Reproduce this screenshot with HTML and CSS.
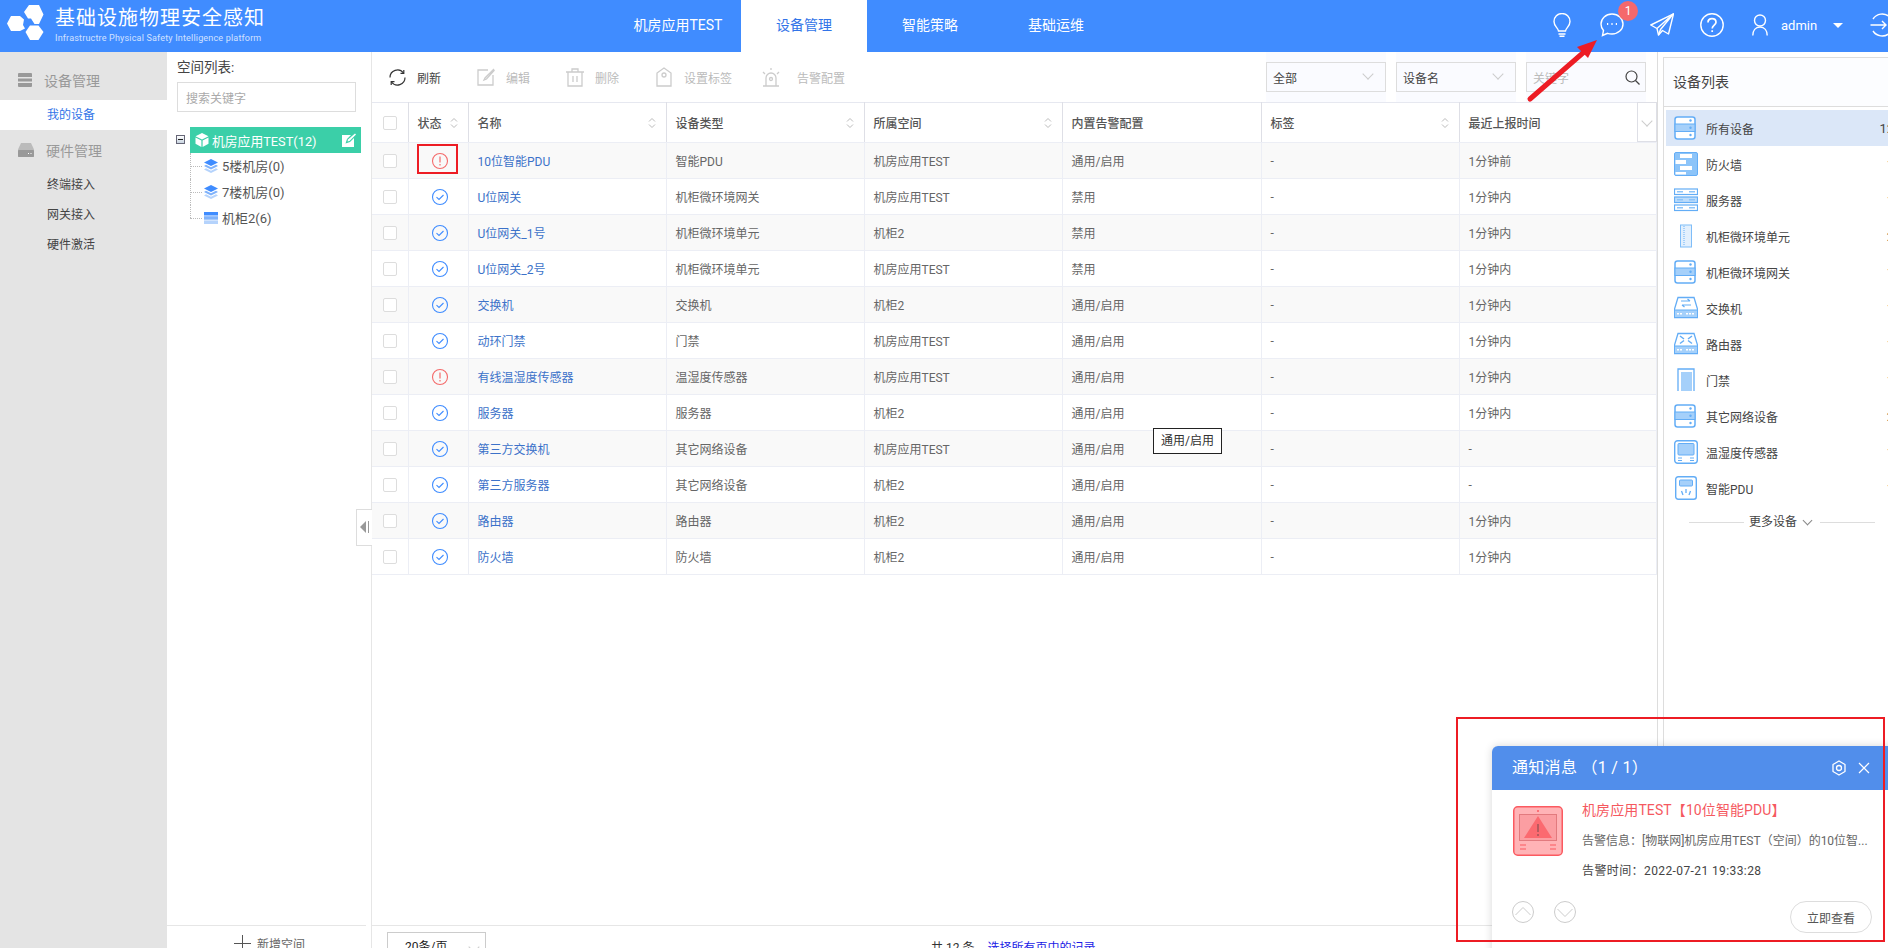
FILE: index.html
```html
<!DOCTYPE html>
<html lang="zh-CN">

<head>
  <meta charset="utf-8">
  <title>基础设施物理安全感知</title>
  <link rel="stylesheet" href="styles.css">
</head>

<body>
  <svg class="defs" width="0" height="0">
    <defs>
      <symbol id="sort" viewBox="0 0 8 12">
        <path d="M1 4.500 4 1.500 7 4.500M1 7.500 4 10.500 7 7.500" fill="none" stroke="#bbb" stroke-width="1" />
      </symbol>
      <symbol id="ok" viewBox="0 0 18 18">
        <circle cx="9" cy="9" r="7.500" fill="none" stroke="#3f8cff" stroke-width="1.100" />
        <path d="M5.500 9.200 8 11.500 12.500 7" fill="none" stroke="#3f8cff" stroke-width="1.100" />
      </symbol>
      <symbol id="warn" viewBox="0 0 18 18">
        <circle cx="9" cy="9" r="7.500" fill="none" stroke="#f46a6a" stroke-width="1.100" />
        <path d="M9 4.500V10.500M9 12V13.500" fill="none" stroke="#f46a6a" stroke-width="1.200" />
      </symbol>
      <symbol id="stack" viewBox="0 0 24 24">
        <rect x="1" y="1" width="20" height="22" rx="2.500" fill="#fff" stroke="#63adf6" stroke-width="1.500" />
        <rect x="1" y="8" width="20" height="7.500" fill="#a5d0fa" stroke="#63adf6" />
        <circle cx="16.500" cy="4.500" r="1.200" fill="#63adf6" />
        <circle cx="16.500" cy="11.700" r="1.200" fill="#63adf6" />
        <circle cx="16.500" cy="19" r="1.200" fill="#63adf6" />
      </symbol>
      <symbol id="wall" viewBox="0 0 24 24">
        <rect x="0.500" y="0.500" width="23" height="23" rx="1.500" fill="#8cc4f9" stroke="#63adf6" />
        <path d="M6 2H18V6H6ZM1.500 8H12V12H1.500ZM6 14H18V18H6ZM1.500 20H12V22.500H1.500Z" fill="#fff" />
      </symbol>
      <symbol id="rack" viewBox="0 0 24 24">
        <g fill="#fff" stroke="#63adf6" stroke-width="1.200">
          <rect x="0.500" y="1" width="23" height="5.500" />
          <rect x="0.500" y="9" width="23" height="5.500" fill="#bcdcfb" />
          <rect x="0.500" y="17" width="23" height="5.500" />
        </g>
        <path d="M3 3.700H9M15 3.700H21M3 11.700H9M15 11.700H21M3 19.700H9M15 19.700H21" stroke="#8cc4f9" stroke-width="1.500" />
      </symbol>
      <symbol id="cabinet" viewBox="0 0 24 24">
        <rect x="6.500" y="1" width="11" height="22" fill="#e3f0fd" stroke="#7fbdf8" />
        <path d="M10 2V22" stroke="#a5d0fa" stroke-width="2" stroke-dasharray="1 1" />
      </symbol>
      <symbol id="switch" viewBox="0 0 24 24">
        <path d="M4 1.500H20L23.500 13V21.500H0.500V13Z" fill="#fff" stroke="#63adf6" stroke-width="1.300" />
        <rect x="0.500" y="14" width="23" height="7.500" fill="#a5d0fa" stroke="#63adf6" />
        <path d="M7 5H16M13.500 3 16 5M17 9H8M10.500 11 8 9" fill="none" stroke="#63adf6" stroke-width="1.200" />
        <path d="M3 17.800H9M12 17.800H21" stroke="#fff" stroke-width="1.500" stroke-dasharray="2 1" />
      </symbol>
      <symbol id="router" viewBox="0 0 24 24">
        <path d="M4 1.500H20L23.500 13V21.500H0.500V13Z" fill="#fff" stroke="#63adf6" stroke-width="1.300" />
        <rect x="0.500" y="14" width="23" height="7.500" fill="#a5d0fa" stroke="#63adf6" />
        <path d="M6 4 10 7M18 4 14 7M6 11.500 10 8.500M18 11.500 14 8.500" stroke="#63adf6" stroke-width="1.500" />
        <path d="M3 17.800H9M12 17.800H21" stroke="#fff" stroke-width="1.500" stroke-dasharray="2 1" />
      </symbol>
      <symbol id="door" viewBox="0 0 24 24">
        <path d="M4 23V1H20V23" fill="#fff" stroke="#63adf6" stroke-width="1.300" />
        <rect x="7" y="4" width="11" height="19" fill="#a5d0fa" />
      </symbol>
      <symbol id="screen" viewBox="0 0 24 24">
        <rect x="0.700" y="0.700" width="22.600" height="22.600" rx="3" fill="#fff" stroke="#63adf6" stroke-width="1.400" />
        <rect x="4" y="3.500" width="16" height="11.500" rx="1" fill="#a5d0fa" stroke="#63adf6" />
        <path d="M4 18H8M4 20.500H8M16 18H20M16 20.500H20" stroke="#63adf6" />
      </symbol>
      <symbol id="pdu" viewBox="0 0 24 24">
        <rect x="1.700" y="0.700" width="20.600" height="22.600" rx="2.500" fill="#fff" stroke="#63adf6" stroke-width="1.400" />
        <rect x="5.500" y="4" width="13" height="6" rx="1" fill="#a5d0fa" stroke="#63adf6" />
        <path d="M12 13V17M7.500 15 9 19M16.500 15 15 19" stroke="#63adf6" stroke-width="1.300" />
      </symbol>
    </defs>
  </svg>

  <div class="app">
    <header class="topbar">
      <div class="brand">
        <svg class="logo" width="38" height="38" viewBox="0 0 38 38">
          <path d="M22 1H32L36.500 10.500 32 20H27.500L24 14.500H21L17 8Z" fill="#fff" />
          <path d="M4 12H13L17 15.500 16 21 18 24.500 13 27H4L0 19.500Z" fill="#fff" />
          <path d="M23 21.500H31.500L36.500 28 31.500 36H23L18.500 28Z" fill="#fff" />
        </svg>
        <div class="brand-text">
          <div class="brand-name">基础设施物理安全感知</div>
          <div class="brand-sub">Infrastructre Physical Safety Intelligence platform</div>
        </div>
      </div>
      <nav class="nav">
        <a class="nav-item">机房应用TEST</a>
        <a class="nav-item active">设备管理</a>
        <a class="nav-item">智能策略</a>
        <a class="nav-item">基础运维</a>
      </nav>
      <div class="tools">
        <svg class="tool-bulb" width="18" height="24" viewBox="0 0 18 24" fill="none" stroke="#fff" stroke-width="1.400">
          <path d="M5.500 18C5 14.500 1 13.500 1 8.500A8 8 0 0 1 17 8.500C17 13.500 13 14.500 12.500 18Z" />
          <path d="M5.500 21H12.500M6.500 23.300H11.500" />
        </svg>
        <span class="tool-chat">
          <svg width="24" height="24" viewBox="0 0 24 24" fill="none" stroke="#fff" stroke-width="1.400">
            <path d="M12 1C5.800 1 1 5.400 1 11C1 13.800 2.200 16 3.500 17.500L2.500 22.500 7.500 20.300C9 20.800 10.500 21 12 21C18.200 21 23 16.600 23 11S18.200 1 12 1Z" />
            <path d="M7 11H8.200M11.400 11H12.600M15.800 11H17" stroke-width="1.800" />
          </svg>
          <b class="badge">1</b>
        </span>
        <svg class="tool-plane" width="24" height="24" viewBox="0 0 24 24" fill="none" stroke="#fff" stroke-width="1.400" stroke-linejoin="round">
          <path d="M23.500 0.800 0.800 12 7 15.500 8.500 22 12.500 17.500 18.500 21Z" />
          <path d="M23.500 0.800 7 15.500M23.500 0.800 10.500 16.500 8.500 22" />
        </svg>
        <svg class="tool-help" width="24" height="24" viewBox="0 0 24 24" fill="none" stroke="#fff" stroke-width="1.400">
          <circle cx="12" cy="12" r="11.200" />
          <path d="M8 9.500C8 7 9.800 5.700 12 5.700S16 7 16 9.200C16 12 12.200 12.300 12.200 15.500M12.200 17.300V19" stroke-width="1.700" />
        </svg>
        <svg class="tool-user" width="16" height="22" viewBox="0 0 16 22" fill="none" stroke="#fff" stroke-width="1.400">
          <circle cx="8" cy="6.500" r="5.500" />
          <path d="M0.800 21.500C0.800 16.500 3.500 13 8 13S15.200 16.500 15.200 21.500" />
        </svg>
        <span class="username">admin</span>
        <i class="caret"></i>
        <svg class="tool-exit" width="22" height="24" viewBox="0 0 22 24" fill="none" stroke="#fff" stroke-width="1.400">
          <path d="M3 6A11 11 0 1 1 3 18M0.500 12H16M12 8 16 12 12 16" />
        </svg>
      </div>
    </header>

    <div class="content">
      <aside class="sidebar">
        <div class="side-group first">
          <svg width="14" height="14" viewBox="0 0 14 14">
            <path d="M1 0H13A1 1 0 0 1 14 1V4H0V1A1 1 0 0 1 1 0ZM0 5.500H14V8.500H0ZM0 10H14V13A1 1 0 0 1 13 14H1A1 1 0 0 1 0 13Z" fill="#999" />
          </svg>
          设备管理
        </div>
        <a class="side-link active">我的设备</a>
        <div class="side-group">
          <svg width="16" height="14" viewBox="0 0 16 14">
            <path d="M3 0H13L16 6.500V14H0V6.500Z" fill="#bbb" />
            <rect y="7" width="16" height="7" rx="1" fill="#999" />
            <path d="M10 10.500H11M12.500 10.500H13.500" stroke="#fff" />
          </svg>
          硬件管理
        </div>
        <a class="side-link">终端接入</a>
        <a class="side-link">网关接入</a>
        <a class="side-link">硬件激活</a>
      </aside>

      <section class="space-panel">
        <div class="space-title">空间列表:</div>
        <input class="space-search" placeholder="搜索关键字">
        <div class="tree">
          <i class="tree-toggle"></i>
          <div class="tree-root">
            <svg width="14" height="14" viewBox="0 0 14 14">
              <path d="M7 0 13.500 3.300 7 6.600 0.500 3.300ZM0.500 4.500 6.400 7.500V14L0.500 10.800ZM13.500 4.500 7.600 7.500V14L13.500 10.800Z" fill="#fff" />
            </svg>
            <span class="tree-root-name">机房应用TEST(12)</span>
            <svg width="14" height="14" viewBox="0 0 14 14">
              <path d="M0 2H9L5 6 3.500 10.500 8 9 12 5V14H0Z" fill="#fff" />
              <path d="M13 0.500 14 1.500 7.500 8 5.500 8.500 6 6.500Z" fill="#fff" />
            </svg>
          </div>
          <div class="tree-node">
            <svg width="14" height="14" viewBox="0 0 14 14">
              <path d="M7 0 14 3.500 7 7 0 3.500Z" fill="#3f8cff" />
              <path d="M2 5.800 7 8.300 12 5.800 14 7 7 10.500 0 7Z" fill="#7fb2fb" />
              <path d="M2 9.300 7 11.800 12 9.300 14 10.500 7 14 0 10.500Z" fill="#b5d3fc" />
            </svg>
            5楼机房(0)
          </div>
          <div class="tree-node">
            <svg width="14" height="14" viewBox="0 0 14 14">
              <path d="M7 0 14 3.500 7 7 0 3.500Z" fill="#3f8cff" />
              <path d="M2 5.800 7 8.300 12 5.800 14 7 7 10.500 0 7Z" fill="#7fb2fb" />
              <path d="M2 9.300 7 11.800 12 9.300 14 10.500 7 14 0 10.500Z" fill="#b5d3fc" />
            </svg>
            7楼机房(0)
          </div>
          <div class="tree-node">
            <svg width="14" height="12" viewBox="0 0 14 12">
              <rect width="14" height="3.500" fill="#3f8cff" />
              <rect y="4.200" width="14" height="3.500" fill="#7fb2fb" />
              <rect y="8.400" width="14" height="3.600" fill="#b5d3fc" />
            </svg>
            机柜2(6)
          </div>
        </div>
        <div class="space-foot">
          <svg width="17" height="17" viewBox="0 0 17 17" stroke="#555">
            <path d="M8.500 0V17M0 8.500H17" />
          </svg>
          新增空间
        </div>
        <div class="collapse"><i></i></div>
      </section>

      <main class="main">
        <div class="toolbar">
          <span class="action live">
            <span class="action-ic">
              <svg width="17" height="17" viewBox="0 0 17 17" fill="none" stroke="#333" stroke-width="1.200">
                <path d="M1 8.500A7.500 7.500 0 0 1 14.500 4M16 8.500A7.500 7.500 0 0 1 2.500 13" />
                <path d="M14.800 1V4.300H11.500M2.200 16V12.700H5.500" />
              </svg>
            </span>刷新
          </span>
          <span class="action">
            <span class="action-ic">
              <svg width="18" height="18" viewBox="0 0 18 18" fill="none" stroke="#ccc" stroke-width="1.300">
                <path d="M11 2H1V17H16V7M17 1 8 10 7 12 9.500 11 17.500 2" />
              </svg>
            </span>编辑
          </span>
          <span class="action">
            <span class="action-ic">
              <svg width="18" height="19" viewBox="0 0 18 19" fill="none" stroke="#ccc" stroke-width="1.300">
                <path d="M0 4H18M6 4V1H12V4M2 4V18H16V4M7 8V14M11 8V14" />
              </svg>
            </span>删除
          </span>
          <span class="action">
            <span class="action-ic">
              <svg width="16" height="20" viewBox="0 0 16 20" fill="none" stroke="#ccc" stroke-width="1.300">
                <path d="M8 1 15 6V19H1V6Z" />
                <circle cx="8" cy="8" r="2" />
              </svg>
            </span>设置标签
          </span>
          <span class="action alarm">
            <span class="action-ic">
              <svg width="18" height="20" viewBox="0 0 18 20" fill="none" stroke="#ccc" stroke-width="1.300">
                <path d="M4 19V11A5 5 0 0 1 14 11V19M1 19H17M9 1V3M1 5 3 7M17 5 15 7" />
                <circle cx="9" cy="12" r="1.500" />
              </svg>
            </span>告警配置
          </span>
          <div class="filters">
            <div class="filter"><div class="select">全部<i class="chev"></i></div></div>
            <div class="filter"><div class="select">设备名<i class="chev"></i></div></div>
            <div class="filter"><div class="select search"><span>关键字</span>
              <svg width="15" height="15" viewBox="0 0 15 15" fill="none" stroke="#444" stroke-width="1.200">
                <circle cx="6.500" cy="6.500" r="5.500" />
                <path d="M10.500 10.500 14.500 14.500" />
              </svg>
            </div></div>
          </div>
        </div>

        <table class="grid">
          <colgroup>
            <col class="c-check"><col class="c-state"><col class="c-wide"><col class="c-wide"><col class="c-wide"><col class="c-conf"><col class="c-tag"><col>
          </colgroup>
          <thead>
            <tr>
              <th><i class="check"></i></th>
              <th><span class="th">状态<svg width="8" height="12"><use href="#sort" /></svg></span></th>
              <th><span class="th">名称<svg width="8" height="12"><use href="#sort" /></svg></span></th>
              <th><span class="th">设备类型<svg width="8" height="12"><use href="#sort" /></svg></span></th>
              <th><span class="th">所属空间<svg width="8" height="12"><use href="#sort" /></svg></span></th>
              <th><span class="th">内置告警配置</span></th>
              <th><span class="th">标签<svg width="8" height="12"><use href="#sort" /></svg></span></th>
              <th class="last"><span class="th">最近上报时间</span><span class="col-menu"><i class="chev"></i></span></th>
            </tr>
          </thead>
          <tbody>
            <tr><td><i class="check"></i></td><td class="st"><svg width="18" height="18"><use href="#warn" /></svg></td><td><a>10位智能PDU</a></td><td>智能PDU</td><td>机房应用TEST</td><td>通用/启用</td><td>-</td><td>1分钟前</td></tr>
            <tr><td><i class="check"></i></td><td class="st"><svg width="18" height="18"><use href="#ok" /></svg></td><td><a>U位网关</a></td><td>机柜微环境网关</td><td>机房应用TEST</td><td>禁用</td><td>-</td><td>1分钟内</td></tr>
            <tr><td><i class="check"></i></td><td class="st"><svg width="18" height="18"><use href="#ok" /></svg></td><td><a>U位网关_1号</a></td><td>机柜微环境单元</td><td>机柜2</td><td>禁用</td><td>-</td><td>1分钟内</td></tr>
            <tr><td><i class="check"></i></td><td class="st"><svg width="18" height="18"><use href="#ok" /></svg></td><td><a>U位网关_2号</a></td><td>机柜微环境单元</td><td>机房应用TEST</td><td>禁用</td><td>-</td><td>1分钟内</td></tr>
            <tr><td><i class="check"></i></td><td class="st"><svg width="18" height="18"><use href="#ok" /></svg></td><td><a>交换机</a></td><td>交换机</td><td>机柜2</td><td>通用/启用</td><td>-</td><td>1分钟内</td></tr>
            <tr><td><i class="check"></i></td><td class="st"><svg width="18" height="18"><use href="#ok" /></svg></td><td><a>动环门禁</a></td><td>门禁</td><td>机房应用TEST</td><td>通用/启用</td><td>-</td><td>1分钟内</td></tr>
            <tr><td><i class="check"></i></td><td class="st"><svg width="18" height="18"><use href="#warn" /></svg></td><td><a>有线温湿度传感器</a></td><td>温湿度传感器</td><td>机房应用TEST</td><td>通用/启用</td><td>-</td><td>1分钟内</td></tr>
            <tr><td><i class="check"></i></td><td class="st"><svg width="18" height="18"><use href="#ok" /></svg></td><td><a>服务器</a></td><td>服务器</td><td>机柜2</td><td>通用/启用</td><td>-</td><td>1分钟内</td></tr>
            <tr><td><i class="check"></i></td><td class="st"><svg width="18" height="18"><use href="#ok" /></svg></td><td><a>第三方交换机</a></td><td>其它网络设备</td><td>机房应用TEST</td><td>通用/启用</td><td>-</td><td>-</td></tr>
            <tr><td><i class="check"></i></td><td class="st"><svg width="18" height="18"><use href="#ok" /></svg></td><td><a>第三方服务器</a></td><td>其它网络设备</td><td>机柜2</td><td>通用/启用</td><td>-</td><td>-</td></tr>
            <tr><td><i class="check"></i></td><td class="st"><svg width="18" height="18"><use href="#ok" /></svg></td><td><a>路由器</a></td><td>路由器</td><td>机柜2</td><td>通用/启用</td><td>-</td><td>1分钟内</td></tr>
            <tr><td><i class="check"></i></td><td class="st"><svg width="18" height="18"><use href="#ok" /></svg></td><td><a>防火墙</a></td><td>防火墙</td><td>机柜2</td><td>通用/启用</td><td>-</td><td>1分钟内</td></tr>
          </tbody>
        </table>

        <div class="pager">
          <div class="page-size">20条/页<i class="chev"></i></div>
          <span class="page-total">共 12 条</span>
          <a class="page-all">选择所有页中的记录</a>
        </div>
      </main>

      <aside class="devices">
        <div class="devices-title">设备列表</div>
        <ul class="device-list">
          <li class="active"><svg width="24" height="24"><use href="#stack" /></svg><span>所有设备</span><em>12</em></li>
          <li><svg width="24" height="24"><use href="#wall" /></svg><span>防火墙</span><em>1</em></li>
          <li><svg width="24" height="24"><use href="#rack" /></svg><span>服务器</span><em>1</em></li>
          <li><svg width="24" height="24"><use href="#cabinet" /></svg><span>机柜微环境单元</span><em>2</em></li>
          <li><svg width="24" height="24"><use href="#stack" /></svg><span>机柜微环境网关</span><em>1</em></li>
          <li><svg width="24" height="24"><use href="#switch" /></svg><span>交换机</span><em>1</em></li>
          <li><svg width="24" height="24"><use href="#router" /></svg><span>路由器</span><em>1</em></li>
          <li><svg width="24" height="24"><use href="#door" /></svg><span>门禁</span><em>1</em></li>
          <li><svg width="24" height="24"><use href="#stack" /></svg><span>其它网络设备</span><em>2</em></li>
          <li><svg width="24" height="24"><use href="#screen" /></svg><span>温湿度传感器</span><em>1</em></li>
          <li><svg width="24" height="24"><use href="#pdu" /></svg><span>智能PDU</span><em>1</em></li>
        </ul>
        <div class="more"><span>更多设备<i class="chev"></i></span></div>
      </aside>
    </div>

    <div class="tip">通用/启用</div>

    <!-- 通知弹窗 -->
    <div class="notice">
      <div class="notice-head">
        <span>通知消息 （1 / 1）</span>
        <svg class="notice-gear" width="16" height="16" viewBox="0 0 16 16" fill="none" stroke="#fff" stroke-width="1.300" stroke-linejoin="round">
          <path d="M8 1 14 4.500V11.500L8 15 2 11.500V4.500Z" />
          <circle cx="8" cy="8" r="2.500" />
        </svg>
        <svg class="notice-close" width="12" height="12" viewBox="0 0 12 12" stroke="#fff" stroke-width="1.200">
          <path d="M1 1 11 11M11 1 1 11" />
        </svg>
      </div>
      <div class="notice-body">
        <svg class="notice-pic" width="50" height="50" viewBox="0 0 50 50">
          <rect x="0.750" y="0.750" width="48.500" height="48.500" rx="4" fill="#ffb3b6" stroke="#fb5a60" stroke-width="1.500" />
          <rect x="6.500" y="8.500" width="37" height="26" fill="#fb9ea2" stroke="#e27a7e" />
          <path d="M25 10 39 32H11Z" fill="#fb6a70" />
          <path d="M25 18V26M25 28V30" stroke="#b85a5e" stroke-width="2" />
          <path d="M7 39H13M7 43H13M37 39H43M37 43H43" stroke="#fb5a60" stroke-width="1.200" />
          <circle cx="25" cy="5" r="1" fill="#fb5a60" />
        </svg>
        <div class="notice-text">
          <div class="notice-name">机房应用TEST【10位智能PDU】</div>
          <div class="notice-line gray">告警信息：[物联网]机房应用TEST（空间）的10位智...</div>
          <div class="notice-line wide">告警时间：2022-07-21 19:33:28</div>
        </div>
      </div>
      <div class="notice-foot">
        <svg width="22" height="22" viewBox="0 0 22 22" fill="none" stroke="#ccc">
          <circle cx="11" cy="11" r="10.500" />
          <path d="M3.500 14 11 6.500 18.500 14" />
        </svg>
        <svg width="22" height="22" viewBox="0 0 22 22" fill="none" stroke="#ccc">
          <circle cx="11" cy="11" r="10.500" />
          <path d="M3.500 8 11 15.500 18.500 8" />
        </svg>
        <button class="notice-btn">立即查看</button>
      </div>
    </div>

    <!-- 截图上的红色标注 -->
    <div class="mark mark-cell"></div>
    <div class="mark mark-notice"></div>
    <svg class="mark-arrow" width="80" height="70" viewBox="0 0 80 70">
      <path d="M4 63 58 16" stroke="#ed1c24" stroke-width="5" stroke-linecap="round" />
      <path d="M71 4 51 11 62 22Z" fill="#ed1c24" />
    </svg>
  </div>
</body>

</html>
```

FILE: styles.css
```css
html,
body {
  margin: 0;
  height: 100%;
  overflow: hidden;
  background: #fff;
}

body {
  font-family: Roboto, "Noto Sans CJK SC", sans-serif;
  font-size: 12px;
  color: #666;
}

.defs {
  display: none;
}

a {
  text-decoration: none;
}

i,
em {
  font-style: normal;
}

.app {
  position: relative;
  width: 1888px;
  height: 975px;
  display: flex;
  flex-direction: column;
}

/* 顶部导航 */
.topbar {
  flex: none;
  height: 52px;
  display: flex;
  background: #408cff;
  color: #fff;
  overflow: hidden;
}

.brand {
  flex: none;
  width: 615px;
  display: flex;
  box-sizing: border-box;
  padding: 3px 0 0 7px;
}

.logo {
  margin-top: 1px;
  flex: none;
}

.brand-text {
  margin-left: 10px;
}

.brand-name {
  margin-top: 3px;
  font-size: 20px;
  line-height: 24px;
  letter-spacing: 1px;
}

.brand-sub {
  margin-top: 2px;
  font-size: 9px;
  line-height: 12px;
  letter-spacing: 0.18px;
  opacity: 0.75;
}

.nav {
  flex: none;
  display: flex;
}

.nav-item {
  width: 126px;
  font-size: 14px;
  line-height: 50px;
  text-align: center;
  color: #fff;
}

.nav-item.active {
  background: #fff;
  color: #3274e8;
}

.tools {
  margin-left: 434px;
  display: flex;
  align-items: center;
  flex: none;
  height: 50px;
}

.tool-chat {
  position: relative;
  display: block;
  width: 24px;
  height: 24px;
  margin-left: 29px;
}

.badge {
  position: absolute;
  left: 18px;
  top: -12px;
  width: 20px;
  height: 20px;
  border-radius: 50%;
  background: #f5686c;
  font-weight: 400;
  font-size: 12px;
  line-height: 20px;
  text-align: center;
}

.tool-plane {
  margin-left: 26px;
}

.tool-help {
  margin-left: 26px;
}

.tool-user {
  margin-left: 28px;
}

.username {
  margin-left: 13px;
  font-size: 13px;
  width: 52px;
}

.caret {
  width: 0;
  height: 0;
  border: 5px solid transparent;
  border-top: 5px solid #fff;
  border-bottom: 0;
}

.tool-exit {
  margin-left: 27px;
  flex: none;
}

/* 主体 */
.content {
  flex: 1;
  display: flex;
  min-height: 0;
}

.sidebar {
  flex: none;
  width: 167px;
  background: #e4e4e4;
  color: #333;
}

.side-group {
  display: flex;
  align-items: center;
  gap: 12px;
  height: 40px;
  padding-left: 18px;
  font-size: 14px;
  color: #999;
}

.side-group.first {
  height: 48px;
  box-sizing: border-box;
  padding-top: 8px;
}

.side-link {
  display: block;
  height: 30px;
  padding-left: 47px;
  line-height: 30px;
  color: #444;
}

.side-link.active {
  background: #fff;
  color: #3274e8;
}

.space-panel {
  position: relative;
  flex: none;
  width: 204px;
  display: flex;
  flex-direction: column;
  border-right: 1px solid #e6e6e6;
}

.space-title {
  margin: 5px 0 0 10px;
  font-size: 13.500px;
  line-height: 20px;
  color: #444;
}

.space-search {
  display: block;
  width: 179px;
  height: 30px;
  box-sizing: border-box;
  margin: 5px 0 0 10px;
  padding: 0 8px;
  border: 1px solid #ddd;
  outline: 0;
  font: 12px "Noto Sans CJK SC", sans-serif;
}

.space-search::placeholder {
  color: #aaa;
}

.tree {
  position: relative;
  flex: 1;
  margin-top: 15px;
  margin-left: 23px;
}

.tree-toggle {
  position: absolute;
  left: -14px;
  top: 8px;
  width: 7px;
  height: 7px;
  border: 1px solid #667;
  background: linear-gradient(#fff, #c8d4e0);
}

.tree-toggle::after {
  content: "";
  position: absolute;
  left: 1px;
  right: 1px;
  top: 3px;
  height: 1px;
  background: #222;
}

.tree-root {
  display: flex;
  align-items: center;
  width: 171px;
  height: 26px;
  box-sizing: border-box;
  padding: 0 5px;
  background: #3bcfa8;
  color: #fff;
  font-size: 12.800px;
}

.tree-root-name {
  flex: 1;
  margin-left: 3px;
}

.tree-node {
  position: relative;
  display: flex;
  align-items: center;
  gap: 4px;
  height: 26px;
  box-sizing: border-box;
  padding: 0 0 1px 14px;
  font-size: 13px;
  color: #555;
}

.tree-node::before {
  content: "";
  position: absolute;
  left: 0;
  top: 13px;
  width: 12px;
  border-top: 1px dotted #bbb;
}

.tree-node::after {
  content: "";
  position: absolute;
  left: 0;
  top: 0;
  height: 100%;
  border-left: 1px dotted #bbb;
}

.tree-node:last-child::after {
  height: 13px;
}

.space-foot {
  display: flex;
  align-items: center;
  gap: 6px;
  height: 50px;
  box-sizing: border-box;
  padding: 0 0 14px 67px;
  border-top: 1px solid #e6e6e6;
  margin-right: 5px;
  color: #666;
}

.collapse {
  position: absolute;
  right: -1px;
  top: 457px;
  width: 15px;
  height: 35px;
  border: 1px solid #ddd;
  border-right: 0;
  background: #fff;
}

.collapse i {
  position: absolute;
  left: 3px;
  top: 11px;
  width: 0;
  height: 0;
  border: 6px solid transparent;
  border-right: 6px solid #999;
  border-left: 0;
}

.collapse i::after {
  content: "";
  position: absolute;
  left: 8px;
  top: -6px;
  width: 1px;
  height: 12px;
  background: #999;
}

.main {
  flex: none;
  width: 1285px;
  display: flex;
  flex-direction: column;
  border-right: 1px solid #ddd;
}

.toolbar {
  flex: none;
  height: 50px;
  display: flex;
  align-items: center;
  padding-left: 16px;
  color: #bbb;
}

.action {
  display: flex;
  align-items: center;
  gap: 11px;
  margin-right: 36px;
}

.action.live {
  color: #444;
}

.action.alarm {
  gap: 17px;
  margin-left: -6px;
}

.action-ic {
  display: flex;
  justify-content: center;
  width: 18px;
}

.filters {
  margin-left: auto;
  display: flex;
  gap: 10px;
  margin-right: 11px;
}

.filter {
  padding: 10px 0;
  background: #fafbff;
}

.select {
  position: relative;
  display: flex;
  align-items: center;
  width: 120px;
  height: 30px;
  box-sizing: border-box;
  padding: 0 6px;
  border: 1px solid #ddd;
  color: #444;
  font-size: 12px;
}

.select.search {
  justify-content: space-between;
  color: #bbb;
  padding-right: 5px;
}

.chev {
  display: block;
  width: 7px;
  height: 7px;
  border-right: 1px solid #ccc;
  border-bottom: 1px solid #ccc;
  transform: rotate(45deg);
}

.select .chev {
  position: absolute;
  right: 13px;
  top: 7px;
}

/* 表格 */
.grid {
  flex: none;
  width: 1285px;
  border-collapse: collapse;
  table-layout: fixed;
}

.c-check {
  width: 36px;
}

.c-state {
  width: 60px;
}

.c-wide {
  width: 198px;
}

.c-conf {
  width: 199px;
}

.c-tag {
  width: 198px;
}

.grid th,
.grid td {
  padding: 0 10px 0 9px;
  border: 1px solid #eceef5;
  border-left: 0;
  font-size: 12px;
  font-weight: 400;
  text-align: left;
  box-sizing: border-box;
}

.grid th {
  height: 40px;
  border-top: 1px solid #e6e8f0;
  border-right-color: #dedfe6;
  font-weight: 500;
  color: #555;
}

.grid td {
  height: 36px;
}

.grid tbody tr:nth-child(odd) {
  background: #f9f9f9;
}

.grid th:first-child,
.grid td:first-child {
  padding: 0 0 0 11px;
}

.grid a {
  color: #3c72c9;
}

.grid .st {
  padding: 0 0 0 3px;
}

.grid .st svg {
  display: block;
  margin: 0 auto;
}

.grid .last {
  position: relative;
  border-right: 0;
}

.check {
  display: block;
  width: 12px;
  height: 12px;
  border: 1px solid #ddd;
  border-radius: 2px;
  background: #fff;
}

.th {
  display: flex;
  justify-content: space-between;
  align-items: center;
}

.col-menu {
  position: absolute;
  right: 0;
  top: -1px;
  width: 20px;
  height: 40px;
  box-sizing: border-box;
  border: 1px solid #dedfe6;
  background: #fff;
}

.col-menu .chev {
  position: absolute;
  left: 5px;
  top: 14px;
}

.pager {
  margin-top: auto;
  flex: none;
  height: 50px;
  display: flex;
  align-items: flex-start;
  border-top: 1px solid #e6e6e6;
  box-sizing: border-box;
}

.page-size {
  position: relative;
  width: 99px;
  height: 36px;
  box-sizing: border-box;
  margin: 6px 0 0 15px;
  padding-left: 17px;
  border: 1px solid #ccc;
  line-height: 28px;
  color: #222;
}

.page-size .chev {
  position: absolute;
  right: 7px;
  top: 10px;
}

.page-total {
  margin: 13px 0 0 445px;
  line-height: 18px;
  color: #333;
}

.page-all {
  margin: 13px 0 0 13px;
  line-height: 18px;
  color: #1a1ae6;
}

/* 右侧设备列表 */
.devices {
  flex: none;
  width: 237px;
  margin: 5px 0 0 5px;
  border: 1px solid #ddd;
  border-right: 0;
  border-bottom: 0;
  box-sizing: border-box;
}

.devices-title {
  height: 49px;
  box-sizing: border-box;
  padding-left: 9px;
  border-bottom: 1px solid #ddd;
  background: #fcfdff;
  font-size: 14px;
  line-height: 49px;
  color: #444;
}

.device-list {
  margin: 3px 0 0 2px;
  padding: 0;
  list-style: none;
}

.device-list li {
  display: flex;
  align-items: center;
  height: 36px;
  padding: 0 6px 0 8px;
  color: #444;
}

.device-list li.active {
  background: #dbe7f8;
}

.device-list span {
  flex: 1;
  margin-left: 8px;
}

.device-list em {
  font-size: 13px;
}

.more {
  position: relative;
  margin: 5px 0 0 25px;
  width: 186px;
  height: 22px;
  line-height: 22px;
  text-align: center;
  color: #444;
}

.more::before {
  content: "";
  position: absolute;
  left: 0;
  right: 0;
  top: 11px;
  border-top: 1px solid #ddd;
}

.more span {
  position: relative;
  display: inline-flex;
  align-items: center;
  gap: 7px;
  padding: 0 9px 0 5px;
  background: #fff;
}

.more .chev {
  margin-top: -4px;
  width: 6px;
  height: 6px;
  border-color: #888;
}

/* 浮层 */
.tip {
  position: absolute;
  left: 1153px;
  top: 428px;
  width: 69px;
  height: 26px;
  box-sizing: border-box;
  border: 1px solid #222;
  background: #fff;
  color: #333;
  line-height: 24px;
  text-align: center;
}

.notice {
  position: absolute;
  left: 1492px;
  top: 746px;
  width: 420px;
  height: 240px;
  border-radius: 6px 0 0 0;
  background: #fff;
  box-shadow: 0 0 8px rgba(0, 0, 0, 0.16);
}

.notice-head {
  position: relative;
  height: 44px;
  padding-left: 20px;
  border-radius: 6px 0 0 0;
  background: #518eeb;
  color: #fff;
  font-size: 16px;
  line-height: 44px;
  letter-spacing: 0.3px;
}

.notice-gear {
  position: absolute;
  left: 339px;
  top: 14px;
}

.notice-close {
  position: absolute;
  left: 366px;
  top: 16px;
}

.notice-body {
  display: flex;
  padding: 16px 0 0 21px;
}

.notice-pic {
  flex: none;
}

.notice-text {
  margin-left: 19px;
}

.notice-name {
  margin-top: -6px;
  font-size: 14px;
  line-height: 20px;
  letter-spacing: 0.1px;
  color: #f5595f;
}

.notice-line {
  margin-top: 10px;
  line-height: 20px;
  color: #444;
}

.notice-line.gray {
  margin-top: 11px;
  color: #666;
}

.notice-line.wide {
  letter-spacing: 0.4px;
}

.notice-foot {
  position: relative;
  display: flex;
  align-items: flex-start;
  gap: 20px;
  margin-top: 20px;
  padding-left: 20px;
}

.notice-btn {
  position: absolute;
  left: 298px;
  top: 0;
  width: 82px;
  height: 32px;
  border: 1px solid #ddd;
  border-radius: 16px;
  background: #fff;
  color: #555;
  font: 12px Roboto, "Noto Sans CJK SC", sans-serif;
}

.mark {
  position: absolute;
  border: 2px solid #ed1c24;
  box-sizing: border-box;
}

.mark-cell {
  left: 417px;
  top: 144px;
  width: 41px;
  height: 30px;
}

.mark-notice {
  left: 1456px;
  top: 717px;
  width: 429px;
  height: 225px;
}

.mark-arrow {
  position: absolute;
  left: 1526px;
  top: 36px;
}
```
